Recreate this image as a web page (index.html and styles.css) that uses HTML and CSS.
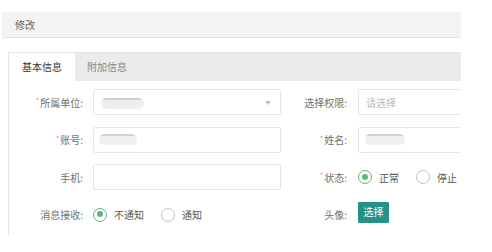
FILE: index.html
```html
<!DOCTYPE html>
<html lang="zh">
<head>
<meta charset="utf-8">
<title>修改</title>
<link rel="stylesheet" href="styles.css">
</head>
<body>
<div class="page">
  <div class="header">修改</div>
  <div class="card">
    <div class="tabs">
      <div class="tab active">基本信息</div>
      <div class="tab">附加信息</div>
    </div>
    <div class="form">
      <label class="label label-left"><span class="req">*</span>所属单位:</label>
      <div class="input select"><span class="blur blur-a"></span><span class="arrow"></span></div>
      <label class="label label-right">选择权限:</label>
      <div class="input wide"><span class="placeholder">请选择</span></div>

      <label class="label label-left"><span class="req">*</span>账号:</label>
      <div class="input"><span class="blur blur-b"></span></div>
      <label class="label label-right"><span class="req">*</span>姓名:</label>
      <div class="input wide"><span class="blur blur-c"></span></div>

      <label class="label label-left">手机:</label>
      <div class="input"></div>
      <label class="label label-right"><span class="req">*</span>状态:</label>
      <div class="radios">
        <span class="radio checked"></span><span class="rtext">正常</span>
        <span class="radio"></span><span class="rtext">停止</span>
      </div>

      <label class="label label-left">消息接收:</label>
      <div class="radios">
        <span class="radio checked"></span><span class="rtext">不通知</span>
        <span class="radio"></span><span class="rtext">通知</span>
      </div>
      <label class="label label-right">头像:</label>
      <div class="btn-cell"><button class="btn">选择</button></div>
    </div>
  </div>
</div>
</body>
</html>
```
FILE: styles.css
```css
* { box-sizing: border-box; }
html, body { margin: 0; background: #fff; }
body {
  font-family: "Noto Sans CJK SC", "Noto Sans", sans-serif;
  font-size: 10px;
  color: #666;
}
.page {
  width: 459px;
  margin-left: 2px;
  padding-top: 12px;
  overflow: hidden;
}
.header {
  height: 26px;
  background: #f3f3f3;
  border-bottom: 1px solid #e3e3e3;
  padding-left: 13px;
  line-height: 25px;
  color: #666;
}
.card {
  margin-top: 14px;
  margin-left: 6px;
  border-left: 1px solid #e6e6e6;
}
.tabs {
  display: flex;
  height: 29px;
  background: #ebebeb;
  border-top: 1px solid #e1e1e1;
}
.tab {
  line-height: 27px;
  padding: 0 12px;
  color: #888;
}
.tab.active {
  width: 66px;
  padding-left: 13px;
  background: #fff;
  color: #333;
  margin-top: -1px;
  border-top: 1px solid #e6e6e6;
  line-height: 28px;
  height: 29px;
}
.form {
  display: grid;
  grid-template-columns: 84px 188px 77px 140px;
  grid-auto-rows: 26px;
  row-gap: 11.5px;
  padding: 8px 0 7px;
}
.label {
  display: flex;
  align-items: center;
  justify-content: flex-end;
  color: #707070;
  white-space: nowrap;
}
.label-left { padding-right: 10px; }
.label-right { padding-right: 11px; }
.req {
  color: #ff6b6b;
  font-size: 7px;
  margin-right: 1px;
  position: relative;
  top: -2px;
}
.input {
  position: relative;
  border: 1px solid #e6e6e6;
  border-radius: 2px;
  display: flex;
  align-items: center;
  padding-left: 7px;
}
.input.wide { width: 150px; }
.placeholder { color: #bbb; }
.arrow {
  position: absolute;
  right: 9px;
  top: 11px;
  width: 0;
  height: 0;
  border-left: 3.5px solid transparent;
  border-right: 3.5px solid transparent;
  border-top: 4px solid #c2c2c2;
}
.blur {
  display: block;
  height: 11px;
  border-radius: 6px;
  background: linear-gradient(#d0d0d0 0 2px, #efefef 2px);
  filter: blur(0.6px);
}
.blur-a { width: 43px; margin-left: 0; margin-top: 3px; }
.blur-b { width: 38px; margin-left: -2px; }
.blur-c { width: 40px; margin-left: -1px; }
.radios {
  display: flex;
  align-items: center;
}
.radio {
  width: 14px;
  height: 14px;
  border-radius: 50%;
  border: 1.5px solid #c2c2c2;
  position: relative;
  flex: none;
}
.radio.checked { border-color: #5fb878; }
.radio.checked::after {
  content: "";
  position: absolute;
  left: 2.5px;
  top: 2.5px;
  width: 6px;
  height: 6px;
  border-radius: 50%;
  background: #5fb878;
}
.rtext {
  margin-left: 7px;
  margin-right: 17px;
  color: #555;
}
.btn-cell { display: flex; align-items: flex-start; }
.btn {
  font: inherit;
  color: #fff;
  background: #249385;
  border: 0;
  border-radius: 1px;
  width: 31px;
  height: 21px;
  padding: 0;
  line-height: 20px;
}
```
